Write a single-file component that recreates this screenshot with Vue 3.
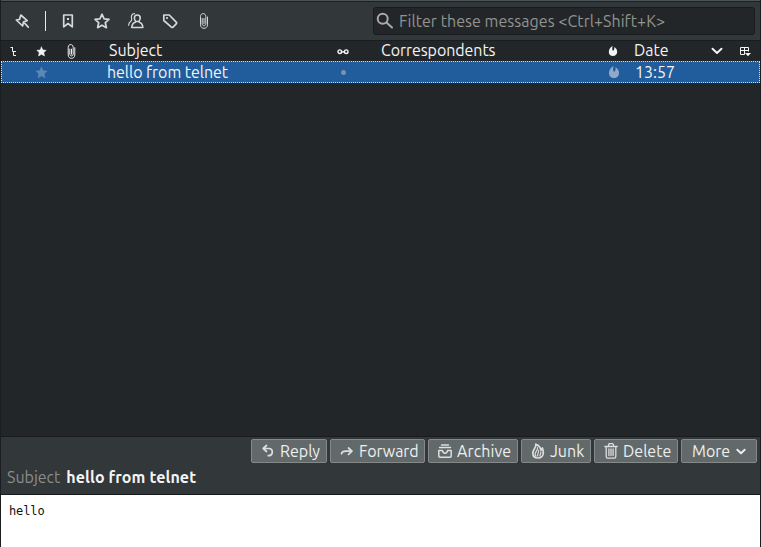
<script setup>
const filters = [
  { name: 'unread', d: 'M3.700 2h8.600v11.800L8 10.500l-4.300 3.300z', dot: true },
  { name: 'starred', d: 'M8 1.200l2.100 4.600 4.900.5-3.700 3.400 1.100 5L8 12.200l-4.400 2.500 1.100-5L1 6.300l4.900-.5z' },
  { name: 'contact', d: 'M6.400 4.900a2.900 2.900 0 0 1 5.800 0c0 1.900-1.300 3.600-2.900 3.600S6.400 6.800 6.400 4.900M7.300 9.300c-2.200.6-3.300 2.100-3.600 5.200h11.200c-.3-3.100-1.400-4.600-3.600-5.200', back: true },
  { name: 'tags', d: 'M1.800 2h5.500l6.900 7.200c.6.600.6 1.100 0 1.700l-3.100 3.200c-.6.500-1.100.5-1.700 0L1.800 7.500z', hole: true },
  { name: 'attachment', clip: true },
]
const clip = 'M6.200 5.500v5.300c0 2.600 3.600 2.600 3.600 0V3.500c0-3.900-5.300-3.900-5.300 0v8.300c0 4.700 7 4.700 7 0V4M8 5.500v5.300'
const actions = [
  { label: 'Reply', cls: 'reply', d: 'M6.500 2.500L3.200 5.500l3.300 3M3.700 5.500H9c4.500 0 4.500 7.200-.7 7.200' },
  { label: 'Forward', cls: 'forward', d: 'M9.500 5L13 8.200l-3.500 3.200M12.500 8.200H6.500c-2 0-3.500.8-4 2.600' },
  { label: 'Archive', cls: 'archive', d: 'M4.500 2h7M2.500 4.500h11M1.800 7.500h3.700c.2 2 .9 2.700 2.500 2.700s2.300-.7 2.500-2.700h3.700V13c0 .8-.3 1.200-1.200 1.200H3c-.9 0-1.200-.4-1.200-1.200z' },
  { label: 'Junk', cls: 'junk', flame: true },
  { label: 'Delete', cls: 'delete', d: 'M1.800 3.500h12.400M5.500 3c0-1.800.3-2.300 1.200-2.300h2.600c.9 0 1.200.5 1.200 2.300M3.200 4v9.500c0 1.200.4 1.700 1.500 1.700h6.600c1.100 0 1.500-.5 1.500-1.700V4M5.900 6v6.500M8 6v6.500M10.100 6v6.500' },
]
const star = 'M8 1.500l2 4.300 4.800.5-3.500 3.300 1 4.900L8 12l-4.300 2.500 1-4.900-3.500-3.300 4.800-.5z'
const fire = 'M7.500 0c-1 2.800-1.200 5.500.5 8C9.800 6.500 10.500 4 10 1.500c3 1.700 4.700 4.600 4.700 7.700 0 4.100-2.800 6.800-6.700 6.800S1.300 13.300 1.300 9.500C1.300 5.700 3.500 2 7.500 0z'
</script>

<template>
  <div class="window">
    <div class="filterbar">
      <svg class="icon pin" viewBox="0 0 16 16"><path d="M6.800 2l6.400 5.700-3.700 1.200-.9 4.100-6.300-6 3.300-.7zM9.700 9.200l4.600 5" /></svg>
      <i class="divider"></i>
      <svg v-for="f in filters" :key="f.name" class="icon filter" :class="f.name" viewBox="0 0 16 16">
        <path v-if="f.clip" :d="clip" />
        <path v-else :d="f.d" />
        <path v-if="f.back" class="back" d="M6.500.6C3.600.6 2.700 3.500 3.700 6.200c.3 1-.3 1.700-1.100 2.300C1.300 9.400.7 10.500.6 12.200" />
        <path v-if="f.dot" class="solid" d="M7 5h2v2H7z" />
        <circle v-if="f.hole" class="solid" cx="5" cy="5" r="1.100" />
      </svg>
      <div class="search">
        <svg class="magnifier" viewBox="0 0 18 18"><circle cx="6.700" cy="6.700" r="5" /><path d="M10.500 10.500L16 15.500" /></svg>
        <span class="placeholder">Filter these messages &lt;Ctrl+Shift+K&gt;</span>
      </div>
    </div>

    <div class="columns header">
      <svg class="thread" viewBox="0 0 9 11"><path d="M1.500 1.500h2M3.500 1v4.500h1v4H7M4 5.500h3" /></svg>
      <svg class="star" viewBox="0 0 16 16"><path :d="star" /></svg>
      <svg class="icon attachment" viewBox="0 0 16 16"><path :d="clip" /></svg>
      <span class="subject">Subject</span>
      <svg class="glasses" viewBox="0 0 12 7"><circle cx="2.800" cy="3.700" r="1.800" /><circle cx="9.200" cy="3.700" r="1.800" /><path d="M4.500 3.200q1.500 1.500 3 0" /></svg>
      <span class="people">Correspondents</span>
      <svg class="fire" viewBox="0 0 16 16"><path :d="fire" /></svg>
      <span class="date">Date</span>
      <svg class="chevron" viewBox="0 0 12 8"><path d="M1.500 1.700L6 6l4.500-4.300" /></svg>
      <svg class="picker" viewBox="0 0 12 11"><path d="M5.500 8.500h-4v-7h8V5.500M1.500 4.500h8M5.500 1.500v7" /><path class="solid" d="M6 7H12L9 10.200z" /></svg>
    </div>

    <div class="columns message">
      <i></i>
      <svg class="star" viewBox="0 0 16 16"><path :d="star" /></svg>
      <i></i>
      <span class="subject">hello from telnet</span>
      <i class="dot"></i>
      <i></i>
      <svg class="fire" viewBox="0 0 16 16"><path :d="fire" /></svg>
      <span class="date">13:57</span>
    </div>

    <div class="empty"></div>

    <div class="details">
      <div class="actions">
        <button v-for="a in actions" :key="a.label" :class="a.cls">
          <svg v-if="a.flame" class="icon" viewBox="0 0 16 16">
            <path d="M5.800 1.200c.8 3.600-3 5-3 8.800 0 3.200 2.200 5 5.200 5s5.300-2 5.300-5.200c0-1.900-.3-3.500-.9-4.800-.5 1-.8 1.800-1.500 2.300C10.500 4.500 8.500 2.200 5.800 1.200z" />
            <path class="inner" d="M7.500 4.500c1 2.800-2.400 3.800-2.400 6.500 0 1 .4 1.700 1 2.200M8.500 7.500c.6 2-1.400 3-.8 5.500M10.800 9c.4 1.700-1 2.200-.9 4" />
          </svg>
          <svg v-else class="icon" viewBox="0 0 16 16"><path :d="a.d" /></svg>
          <span>{{ a.label }}</span>
        </button>
        <button class="more"><span>More</span><svg class="chevron" viewBox="0 0 12 8"><path d="M2.300 2.700L6 6.200l3.700-3.500" /></svg></button>
      </div>
      <div class="summary"><span class="label">Subject</span><strong>hello from telnet</strong></div>
    </div>

    <div class="body">hello</div>
  </div>
</template>

<style>
body { margin: 0; overflow: hidden; }
</style>

<style scoped>
* { box-sizing: border-box; }
.window {
  width: 761px; height: 547px; display: flex; flex-direction: column;
  background: #232629; border: solid #1b1e20; border-width: 0 1px;
  font: 16px/20px "Ubuntu", "Noto Sans", sans-serif; color: #f4f4f4; white-space: nowrap;
}
svg { display: block; flex: none; overflow: visible; fill: none; stroke: currentColor; stroke-width: 1.700; stroke-linecap: round; stroke-linejoin: round; }
.icon { width: 16px; height: 16px; }
.solid { fill: currentColor; stroke: none; }

.filterbar { height: 41px; flex: none; display: flex; align-items: center; border-top: 1px solid #4b5356; border-bottom: 1px solid #1a1d1f; background: #32373a; box-shadow: inset 0 1px #1e2123; color: #d7d8d8; padding: 1px 5px 0 13px; }
.divider { width: 1px; height: 20px; margin: 0 14px 0 15px; background: #e8e8e8; }
.filter { margin-right: 18px; }
.contact { stroke-width: 1.600; }
.attachment { stroke-width: 1; }
.back { stroke-width: 1.200; }
.search { width: 382px; height: 28px; margin-left: auto; display: flex; align-items: center; padding: 0 4px 1px 2px; border: 1px solid #191c1e; border-radius: 3px; background: #232629; color: #92938f; }
.magnifier { width: 18px; height: 18px; margin-right: 5px; stroke-width: 2; color: #aaa9a6; }
.placeholder { letter-spacing: .045px; }

.columns { display: grid; flex: none; grid-template-columns: 25px 30px 30px 233px 47px 234px 26px 77px 27px 30px; align-items: center; }
.header { height: 20px; }
.header > span { margin-top: -2px; }
.header > svg, .message > svg { justify-self: center; }
.subject { padding-left: 21px; }
.people { padding-left: 15px; letter-spacing: -.07px; }
.date { padding-left: 8px; }
.message .date { padding-left: 7px; }
.header .subject { padding-left: 23px; }
.thread { width: 9px; height: 11px; stroke-width: 1; stroke-linecap: butt; }
.star { width: 11px; height: 11px; fill: currentColor; stroke-width: .8; }
.header .attachment { width: 15px; height: 15px; stroke-width: 1.050; }
.glasses { width: 12px; height: 7px; stroke-width: 1.400; }
.fire { width: 12px; height: 12px; fill: currentColor; stroke: none; }
.header .fire { width: 10px; height: 10px; }
.chevron { width: 12px; height: 8px; stroke-width: 1.900; }
.picker { width: 12px; height: 11px; stroke-width: 1; stroke-linejoin: miter; stroke-linecap: butt; }
.message { height: 22px; background: #215d9c; border: 1px dotted #ffdf70; grid-template-columns: 24px 31px 29px 233px 48px 233px 28px 75px; }
.message .star { width: 13px; height: 13px; color: #5e87b4; }
.message .fire { color: #8faac9; }
.message .subject { letter-spacing: -.05px; }
.dot { width: 5px; height: 5px; border-radius: 50%; background: #7b91ad; justify-self: center; }

.empty { flex: 1; }
.details { height: 59px; flex: none; padding: 2px 3px 0 6px; background: #32373a; border-top: 1px solid #191b1d; border-bottom: 1px solid #191b1d; }
.actions { display: flex; justify-content: flex-end; gap: 3px; }
button { height: 24px; display: flex; align-items: center; padding: 0 0 0 8px; border: 1px solid #858988; border-radius: 2px; background: #62696a; color: #eeefee; font: inherit; letter-spacing: inherit; }
button .icon { margin-right: 4px; color: #dededd; }
.reply { width: 76px; }
.forward { width: 95px; letter-spacing: -.1px; }
.archive { width: 90px; letter-spacing: .1px; }
.junk { width: 70px; }
.delete { width: 84px; }
.more { width: 76px; padding-left: 10px; }
.more .chevron { margin-left: 5px; }
.archive .icon { stroke-width: 1.500; }
.inner { stroke-width: 1.200; }
.delete .icon { stroke-width: 1.300; }
.summary { display: flex; gap: 6px; margin-top: 4px; }
.label { color: #8b8d88; }
strong { font-weight: 700; letter-spacing: .1px; }
.body { height: 52px; flex: none; padding: 6px 8px; background: #fff; color: #111; font: 12px/20px "DejaVu Sans Mono", monospace; letter-spacing: -.1px; }
</style>
